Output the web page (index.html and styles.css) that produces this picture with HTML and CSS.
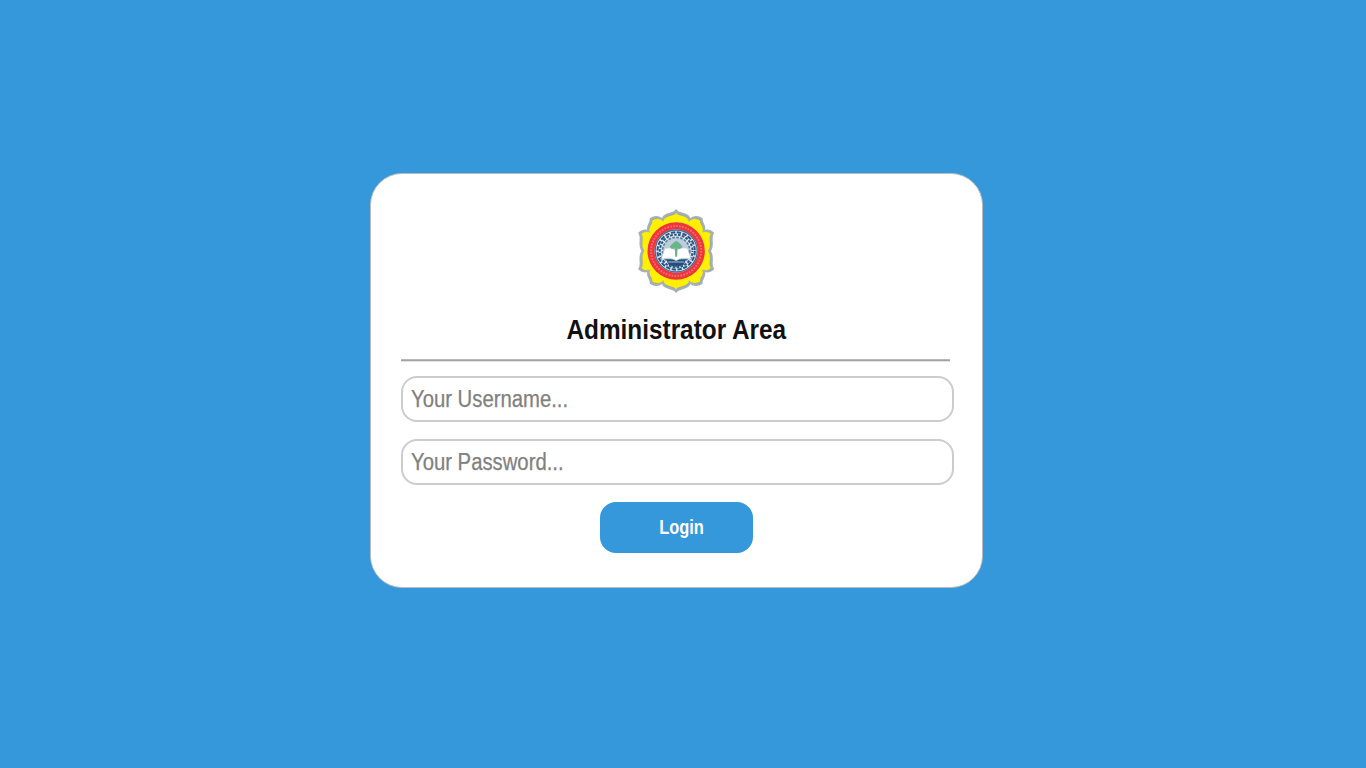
FILE: index.html
```html
<!DOCTYPE html>
<html lang="en">
<head>
<meta charset="utf-8">
<title>Administrator Area</title>
<link rel="stylesheet" href="styles.css">
</head>
<body>
<main class="card">
  <svg class="logo" viewBox="-150.5 -150 300 300">
    <defs>
      <path id="quarter" d="M0 -121C6 -109 40 -115 40 -92C53 -106 68 -102 76 -96C73 -84 92 -74 81 -58C94 -63 104 -60 110 -54C99 -39 115 -18 100 0H0Z"/>
      <g id="flower">
        <use href="#quarter"/><use href="#quarter" transform="scale(-1 1)"/><use href="#quarter" transform="scale(1 -1)"/><use href="#quarter" transform="scale(-1 -1)"/>
      </g>
    </defs>
    <use href="#flower" fill="#929fae" stroke="#a4afba" stroke-width="7" stroke-linejoin="round"/>
    <use href="#flower" fill="#fff000" stroke="#fff000" stroke-width="1" transform="scale(.945)"/>
    <circle r="86" fill="#f0343c"/>
    <circle r="75" fill="none" stroke="#f86c70" stroke-width="6" stroke-dasharray="5 4"/>
    <circle r="65" fill="#dce6ee"/>
    <circle r="56" fill="none" stroke="#2b5583" stroke-width="6" stroke-dasharray="13 4.6"/>
    <circle r="49" fill="none" stroke="#2b5583" stroke-width="6" stroke-dasharray="8 4" stroke-dashoffset="5"/>
    <circle r="63" fill="none" stroke="#456d94" stroke-width="4"/>
    <circle r="41" fill="#bccddb" stroke="#5b7f9f" stroke-width="5" stroke-dasharray="8 4"/>
    <path d="M-30 25H30L22 42Q0 52 -22 42Z" fill="#244f7c"/>
    <path d="M-24 33H24" stroke="#a8bed0" stroke-width="3"/>
    <path d="M0 29Q-18 17 -45 25L-34 -8Q-13 -13 0 0Q13 -13 34 -8L45 25Q18 17 0 29Z" fill="#fff" stroke="#b8c5d1" stroke-width="2"/>
    <path d="M0 -31L10 -24L20 -12L10 -6L4 -8L3 17H-3L-4 -8L-12 -6L-20 -13L-9 -24Z" fill="#6bb58c"/>
  </svg>
  <h1 class="title"><span class="title-text">Administrator Area</span></h1>
  <div class="rule"></div>
  <div class="field"><span class="hint">Your Username...</span></div>
  <div class="field"><span class="hint">Your Password...</span></div>
  <button class="login"><span class="login-text">Login</span></button>
</main>
</body>
</html>
```
FILE: styles.css
```css
* { box-sizing: border-box; }
body {
  margin: 0;
  height: 768px;
  padding: 173px 0 0 370px;
  overflow: hidden;
  background: #3498db;
  font-family: "Liberation Sans", Arial, sans-serif;
}
.card {
  display: flex;
  flex-direction: column;
  align-items: center;
  width: 613px;
  height: 415px;
  padding: 27px 31px 0 30px;
  background: #fff;
  border: 1px solid #b9bcbd;
  border-radius: 32px;
}
.logo { width: 100px; height: 100px; flex: none; }
.title {
  display: flex;
  justify-content: center;
  width: 100%;
  height: 58px;
  margin: 0;
  padding-top: 13px;
  font-size: 28px;
  line-height: 32px;
  color: #111;
}
.title-text { white-space: nowrap; transform: scaleX(.87); }
.rule {
  flex: none;
  align-self: flex-start;
  width: 549px;
  height: 3px;
  margin-bottom: 14px;
  background: linear-gradient(#b8b8b8 0 1px, #a2a2a2 1px 2px, #e2e2e2 2px);
}
.field {
  flex: none;
  align-self: flex-start;
  width: 553px;
  height: 46px;
  margin-bottom: 17px;
  padding-left: 8px;
  border: 2px solid #ccc;
  border-radius: 16px;
  line-height: 42px;
  font-size: 23px;
  color: #808080;
  -webkit-text-stroke: .25px #808080;
}
.hint { display: inline-block; transform: scaleX(.882); transform-origin: left; }
.login {
  width: 153px;
  height: 51px;
  margin: 0;
  padding: 0 0 0 10px;
  border: 0;
  border-radius: 16px;
  background: #3498db;
  color: #fff;
  font: bold 20px/48px "Liberation Sans", Arial, sans-serif;
}
.login-text { display: block; transform: translateY(-1px) scaleX(.82); }
```
